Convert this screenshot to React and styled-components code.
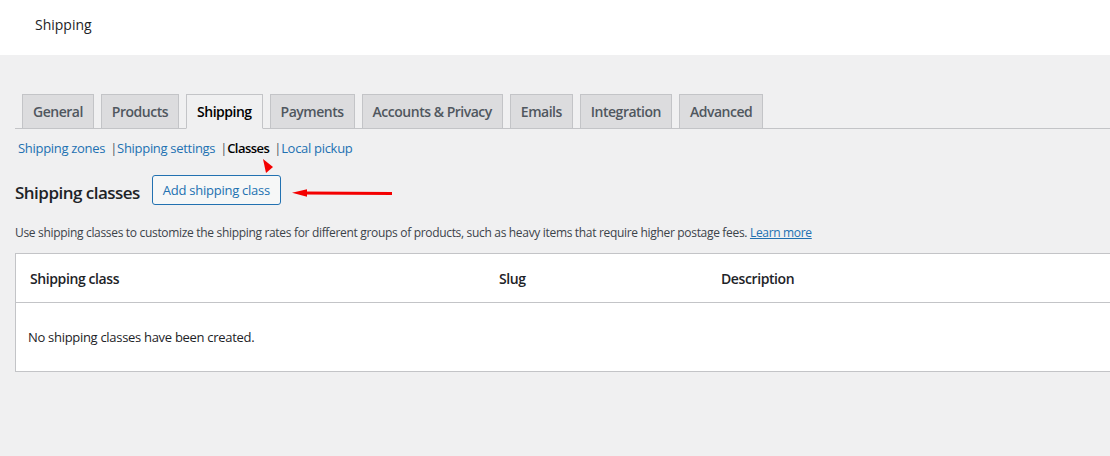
import React from "react";
import styled, { createGlobalStyle } from "styled-components";

const GlobalStyle = createGlobalStyle`
  html, body { margin: 0; padding: 0; }
  body {
    background: #f0f0f1;
    font-family: "Open Sans", "Noto Sans", sans-serif;
    color: #1d2327;
    overflow: hidden;
    width: 1110px;
    height: 456px;
  }
  * { box-sizing: border-box; }
`;

const Page = styled.div`
  position: relative;
  width: 1110px;
  height: 456px;
`;

const Header = styled.header`
  height: 55px;
  background: #fff;
  display: flex;
  align-items: center;
  padding-left: 35px;
  padding-bottom: 6px;
  font-size: 14px;
  font-weight: 400;
  color: #1d2327;
`;

const Wrap = styled.div`
  padding-left: 15px;
  padding-top: 39px;
`;

const TabBar = styled.nav`
  display: flex;
  padding-left: 7px;
  border-bottom: 1px solid #c3c4c7;
`;

const Tab = styled.a`
  display: block;
  height: 35px;
  margin-right: 7px;
  margin-bottom: -1px;
  padding: 0 10px;
  line-height: 33px;
  font-size: 14px;
  font-weight: 600;
  letter-spacing: -0.49px;
  border: 1px solid #c3c4c7;
  border-bottom: ${(p) => (p.$active ? "1px solid #f0f0f1" : "1px solid #c3c4c7")};
  background: ${(p) => (p.$active ? "#f0f0f1" : "#dcdcde")};
  color: ${(p) => (p.$active ? "#000" : "#50575e")};
  text-decoration: none;
`;

const SubNav = styled.ul`
  list-style: none;
  margin: 9px 0 0 3px;
  padding: 0;
  display: flex;
  font-size: 13px;
  line-height: 20px;
  letter-spacing: -0.3px;
  color: #50575e;
  white-space: pre;
`;

const SubItem = styled.li`
  display: flex;
`;

const SubLink = styled.a`
  color: ${(p) => (p.$current ? "#000" : "#2271b1")};
  font-weight: ${(p) => (p.$current ? 600 : 400)};
  letter-spacing: ${(p) => (p.$current ? "-0.55px" : "-0.3px")};
  text-decoration: none;
`;

const Separator = styled.span`
  margin-left: 2px;
`;

const HeadingRow = styled.div`
  display: flex;
  align-items: center;
  gap: 12px;
  margin-top: 17px;
`;

const Title = styled.h2`
  margin: 0;
  font-size: 17px;
  font-weight: 600;
  letter-spacing: -0.52px;
  color: #1d2327;
  padding-top: 5px;
`;

const Button = styled.button`
  height: 30px;
  padding: 0 10px;
  border: 1px solid #2271b1;
  border-radius: 3px;
  background: #f6f7f7;
  color: #2271b1;
  font-family: inherit;
  font-size: 13px;
  letter-spacing: -0.25px;
  cursor: pointer;
`;

const Description = styled.p`
  margin: 19px 0 0;
  font-size: 12px;
  line-height: 18px;
  letter-spacing: -0.32px;
  color: #3c434a;
`;

const DescLink = styled.a`
  color: #2271b1;
  text-decoration: underline;
`;

const Table = styled.div`
  margin-top: 11px;
  width: 1120px;
  background: #fff;
  border: 1px solid #c3c4c7;
`;

const HeadRow = styled.div`
  display: grid;
  grid-template-columns: 469px 222px 1fr;
  height: 49px;
  align-items: center;
  border-bottom: 1px solid #c3c4c7;
`;

const HeadCell = styled.div`
  padding-left: 14px;
  font-size: 14px;
  font-weight: 600;
  letter-spacing: -0.4px;
  color: #1d2327;
`;

const EmptyRow = styled.div`
  height: 68px;
  display: flex;
  align-items: center;
  padding-left: 12px;
  font-size: 13px;
  letter-spacing: -0.3px;
  color: #1d2327;
`;

const Annotation = styled.svg`
  position: absolute;
  left: 0;
  top: 0;
  pointer-events: none;
`;

const tabs = [
  "General",
  "Products",
  "Shipping",
  "Payments",
  "Accounts & Privacy",
  "Emails",
  "Integration",
  "Advanced",
];

const sections = [
  { label: "Shipping zones" },
  { label: "Shipping settings" },
  { label: "Classes", current: true },
  { label: "Local pickup" },
];

export default function App() {
  return (
    <Page>
      <GlobalStyle />
      <Header>Shipping</Header>
      <Wrap>
        <TabBar>
          {tabs.map((t) => (
            <Tab key={t} $active={t === "Shipping"} href="#">
              {t}
            </Tab>
          ))}
        </TabBar>
        <SubNav>
          {sections.map((s, i) => (
            <SubItem key={s.label}>
              <SubLink $current={s.current} href="#">
                {s.label}
              </SubLink>
              {i < sections.length - 1 && <Separator> |</Separator>}
            </SubItem>
          ))}
        </SubNav>
        <HeadingRow>
          <Title>Shipping classes</Title>
          <Button>Add shipping class</Button>
        </HeadingRow>
        <Description>
          Use shipping classes to customize the shipping rates for different groups of products, such as
          heavy items that require higher postage fees. <DescLink href="#">Learn more</DescLink>
        </Description>
        <Table>
          <HeadRow>
            <HeadCell>Shipping class</HeadCell>
            <HeadCell>Slug</HeadCell>
            <HeadCell>Description</HeadCell>
          </HeadRow>
          <EmptyRow>No shipping classes have been created.</EmptyRow>
        </Table>
      </Wrap>
      <Annotation width="1110" height="456" viewBox="0 0 1110 456">
        <polygon points="263,159 273,167 266,173" fill="#f40000" />
        <polygon points="292,192.7 307,189.3 307,196.7" fill="#f40000" />
        <line x1="305" y1="193" x2="392" y2="193.5" stroke="#f40000" strokeWidth="3" />
      </Annotation>
    </Page>
  );
}
